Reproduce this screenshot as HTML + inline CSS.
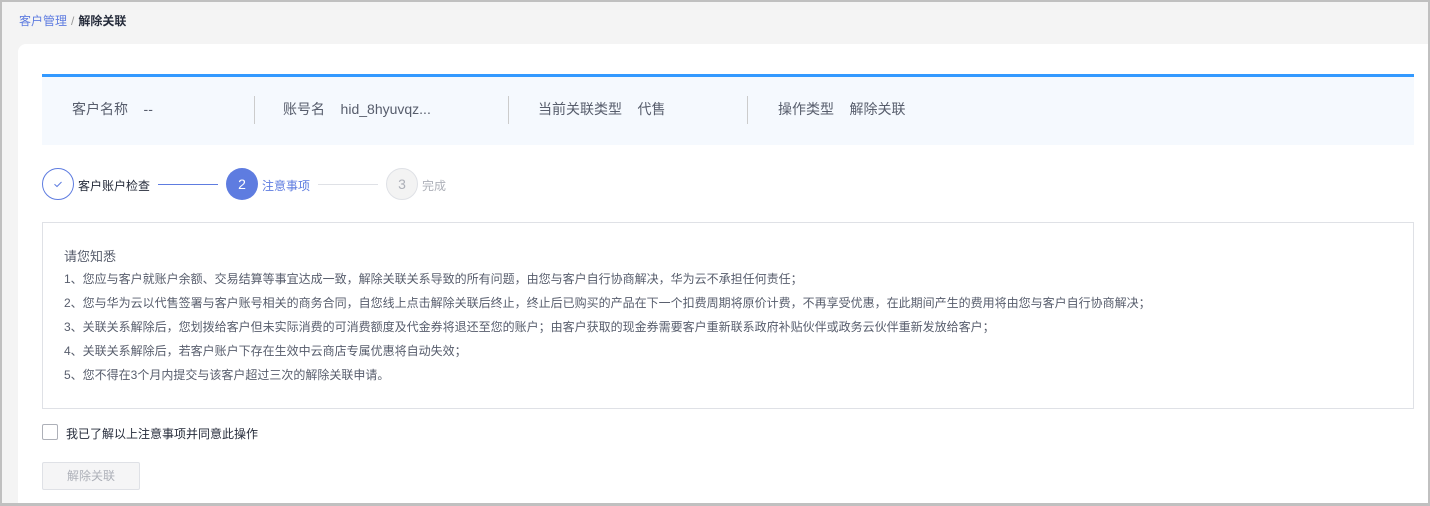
<!DOCTYPE html>
<html><head><meta charset="utf-8"><style>
*{box-sizing:border-box;margin:0;padding:0}
html,body{width:1430px;height:506px;overflow:hidden}
body{background:#c0c0c0;font-family:"Liberation Sans","Noto Sans CJK SC",sans-serif;position:relative}
.a{position:absolute}
.pg{left:2px;top:2px;width:1426px;height:501px;background:#f4f4f4}
.bc{left:19px;top:12px;font-size:12px;color:#5e7ce0}
.bc span{color:#999;margin:0 4px}
.bc b{color:#252b3a;font-weight:bold}
.card{left:18px;top:44px;width:1410px;height:459px;background:#fff;border-radius:8px 0 0 0}
.bar{left:42px;top:74px;width:1372px;height:3px;background:#3399ff}
.info{left:42px;top:77px;width:1372px;height:68px;background:#f5f9fe;font-size:14px;color:#575d6c}
.info div{position:absolute;top:22px;white-space:nowrap}
.dv{position:absolute;top:19px;width:1px;height:28px;background:#ccc}
.c{position:absolute;width:32px;height:32px;border-radius:50%;font-size:14px;text-align:center;line-height:30px}
.st{position:absolute;font-size:12px;top:177px}
.box{left:42px;top:222px;width:1372px;height:187px;border:1px solid #dfe1e6;color:#575d6c;font-size:12px}
.box p{position:absolute;left:21px;white-space:nowrap}
</style></head><body>
<div class="a pg"></div>
<div class="a bc">客户管理<span>/</span><b>解除关联</b></div>
<div class="a card"></div>
<div class="a bar"></div>
<div class="a info">
<div style="left:30px">客户名称&nbsp;&nbsp;&nbsp;&nbsp;--</div>
<span class="dv" style="left:212px"></span>
<div style="left:241px">账号名&nbsp;&nbsp;&nbsp;&nbsp;hid_8hyuvqz...</div>
<span class="dv" style="left:466px"></span>
<div style="left:496px">当前关联类型&nbsp;&nbsp;&nbsp;&nbsp;代售</div>
<span class="dv" style="left:705px"></span>
<div style="left:736px">操作类型&nbsp;&nbsp;&nbsp;&nbsp;解除关联</div>
</div>
<div class="c" style="left:42px;top:168px;border:1px solid #5e7ce0;color:#5e7ce0"><svg width="12" height="12" viewBox="0 0 12 12" style="margin-top:9px"><path d="M2.5 6.2l2.5 2.3 4.5-4.5" fill="none" stroke="#5e7ce0" stroke-width="1"/></svg></div>
<div class="st" style="left:78px;color:#252b3a">客户账户检查</div>
<div class="a" style="left:158px;top:184px;width:60px;height:1px;background:#5e7ce0"></div>
<div class="c" style="left:226px;top:168px;background:#5e7ce0;color:#fff;line-height:32px">2</div>
<div class="st" style="left:262px;color:#5e7ce0">注意事项</div>
<div class="a" style="left:318px;top:184px;width:60px;height:1px;background:#dfe1e6"></div>
<div class="c" style="left:386px;top:168px;border:1px solid #dfe1e6;background:#f3f3f3;color:#adb0b8">3</div>
<div class="st" style="left:422px;color:#adb0b8">完成</div>
<div class="a box">
<p style="top:23px;font-size:13px">请您知悉</p>
<p style="top:47px">1、您应与客户就账户余额、交易结算等事宜达成一致，解除关联关系导致的所有问题，由您与客户自行协商解决，华为云不承担任何责任；</p>
<p style="top:71px">2、您与华为云以代售签署与客户账号相关的商务合同，自您线上点击解除关联后终止，终止后已购买的产品在下一个扣费周期将原价计费，不再享受优惠，在此期间产生的费用将由您与客户自行协商解决；</p>
<p style="top:95px">3、关联关系解除后，您划拨给客户但未实际消费的可消费额度及代金券将退还至您的账户；由客户获取的现金券需要客户重新联系政府补贴伙伴或政务云伙伴重新发放给客户；</p>
<p style="top:119px">4、关联关系解除后，若客户账户下存在生效中云商店专属优惠将自动失效；</p>
<p style="top:143px">5、您不得在3个月内提交与该客户超过三次的解除关联申请。</p>
</div>
<div class="a" style="left:42px;top:424px;width:16px;height:16px;border:1px solid #adb0b8;border-radius:2px;background:#fff"></div>
<div class="a" style="left:66px;top:425px;font-size:12px;color:#252b3a">我已了解以上注意事项并同意此操作</div>
<div class="a" style="left:42px;top:462px;width:98px;height:28px;border:1px solid #dfe1e6;background:#f5f5f6;border-radius:2px;color:#adb0b8;font-size:12px;text-align:center;line-height:26px">解除关联</div>
</body></html>
